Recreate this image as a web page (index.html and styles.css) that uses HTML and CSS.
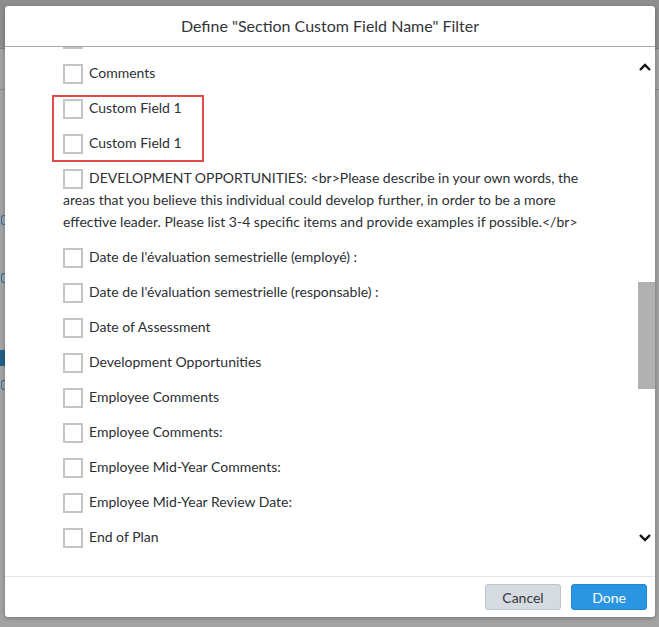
FILE: index.html
```html
<!DOCTYPE html>
<html>
<head>
<meta charset="utf-8">
<link rel="stylesheet" href="styles.css">
</head>
<body>
<div class="page">
  <div class="page-top"></div>
  <div class="page-panel">
    <div class="page-line"></div>
    <div class="frag f1"></div>
    <div class="frag f2"></div>
    <div class="page-chip"></div>
    <div class="frag f3"></div>
  </div>
</div>
<div class="dialog">
  <div class="dialog-header">Define "Section Custom Field Name" Filter</div>
  <div class="dialog-body">
    <div class="list">
      <label class="row"><span class="box"></span></label>
      <label class="row"><span class="box"></span><span class="text">Comments</span></label>
      <label class="row"><span class="box"></span><span class="text">Custom Field 1</span></label>
      <label class="row"><span class="box"></span><span class="text">Custom Field 1</span></label>
      <label class="row"><span class="box"></span><span class="text">DEVELOPMENT OPPORTUNITIES: &lt;br&gt;Please describe in your own words, the areas that you believe this individual could develop further, in order to be a more effective leader. Please list 3-4 specific items and provide examples if possible.&lt;/br&gt;</span></label>
      <label class="row"><span class="box"></span><span class="text">Date de l'évaluation semestrielle (employé) :</span></label>
      <label class="row"><span class="box"></span><span class="text">Date de l'évaluation semestrielle (responsable) :</span></label>
      <label class="row"><span class="box"></span><span class="text">Date of Assessment</span></label>
      <label class="row"><span class="box"></span><span class="text">Development Opportunities</span></label>
      <label class="row"><span class="box"></span><span class="text">Employee Comments</span></label>
      <label class="row"><span class="box"></span><span class="text">Employee Comments:</span></label>
      <label class="row"><span class="box"></span><span class="text">Employee Mid-Year Comments:</span></label>
      <label class="row"><span class="box"></span><span class="text">Employee Mid-Year Review Date:</span></label>
      <label class="row"><span class="box"></span><span class="text">End of Plan</span></label>
    </div>
    <div class="highlight"></div>
    <div class="scrollbar">
      <svg class="arrow up" width="14" height="10" viewBox="0 0 14 10"><path d="M2 8 L7 3 L12 8" fill="none" stroke="#111" stroke-width="2.4"/></svg>
      <div class="thumb"></div>
      <svg class="arrow down" width="14" height="10" viewBox="0 0 14 10"><path d="M2 2 L7 7 L12 2" fill="none" stroke="#111" stroke-width="2.4"/></svg>
    </div>
  </div>
  <div class="dialog-footer">
    <button class="btn btn-cancel">Cancel</button>
    <button class="btn btn-done">Done</button>
  </div>
</div>
</body>
</html>
```

FILE: styles.css
```css
html, body {
  margin: 0;
  padding: 0;
}
body {
  width: 659px;
  height: 627px;
  background: #989898;
  overflow: hidden;
  font-family: Lato, "Noto Sans", sans-serif;
  position: relative;
}
.page {
  width: 659px;
  height: 627px;
  display: flex;
  flex-direction: column;
}
.page-top {
  height: 48px;
  background: #8e8e8e;
  border-bottom: 1px solid #7c7c7c;
}
.page-panel {
  flex: 1;
  background: #a3a3a3;
  position: relative;
}
.page-line {
  height: 40px;
  border-bottom: 1px solid #8a8a8a;
}
.frag {
  position: absolute;
  left: 1px;
  width: 4px;
  height: 8px;
  border-left: 1px solid #2f6f9c;
  border-top: 1px solid #2f6f9c;
  border-bottom: 1px solid #2f6f9c;
  border-radius: 3px 0 0 3px;
}
.f1 { top: 166px; }
.f2 { top: 224px; }
.f3 { top: 331px; }
.page-chip {
  position: absolute;
  left: 0;
  top: 301px;
  width: 5px;
  height: 16px;
  background: #245d86;
}
.dialog {
  position: absolute;
  left: 5px;
  top: 6px;
  width: 650px;
  height: 611px;
  background: #fff;
  border-radius: 3px;
  box-shadow: 0 1px 4px rgba(0,0,0,0.3);
  display: flex;
  flex-direction: column;
  overflow: hidden;
}
.dialog-header {
  height: 39px;
  flex: none;
  border-bottom: 1px solid #a8a8a8;
  display: flex;
  align-items: center;
  justify-content: center;
  font-size: 16px;
  color: #32363a;
  padding-bottom: 1px;
}
.dialog-body {
  flex: 1;
  position: relative;
  overflow: hidden;
}
.list {
  margin-top: -26px;
  padding: 0 70px 0 58px;
}
.row {
  display: block;
  padding: 6px 0 7px;
  line-height: 22px;
  font-size: 14px;
  color: #2c3034;
}
.box {
  display: inline-block;
  width: 16px;
  height: 16px;
  border: 2px solid #c4c4c4;
  vertical-align: -6px;
  margin-right: 6px;
}
.highlight {
  position: absolute;
  left: 47px;
  top: 48px;
  width: 148px;
  height: 63px;
  border: 2px solid #e24b45;
}
.scrollbar {
  position: absolute;
  right: 0;
  top: 0;
  width: 18px;
  height: 100%;
}
.arrow {
  position: absolute;
  left: 1px;
}
.arrow.up { top: 15px; }
.arrow.down { top: 486px; }
.thumb {
  position: absolute;
  right: 0;
  top: 235px;
  width: 17px;
  height: 107px;
  background: #b1b1b1;
}
.dialog-footer {
  height: 40px;
  flex: none;
  border-top: 1px solid #e4e4e4;
  display: flex;
  align-items: center;
  justify-content: flex-end;
  gap: 10px;
  padding-right: 8px;
}
.btn {
  width: 76px;
  height: 26px;
  border-radius: 3px;
  font-family: Lato, "Noto Sans", sans-serif;
  font-size: 14px;
  padding: 0;
}
.btn-cancel {
  background: #d5dbe1;
  border: 1px solid #bcc4cc;
  color: #32363a;
}
.btn-done {
  background: #2a96e3;
  border: 1px solid #2288d4;
  color: #fff;
}
```
